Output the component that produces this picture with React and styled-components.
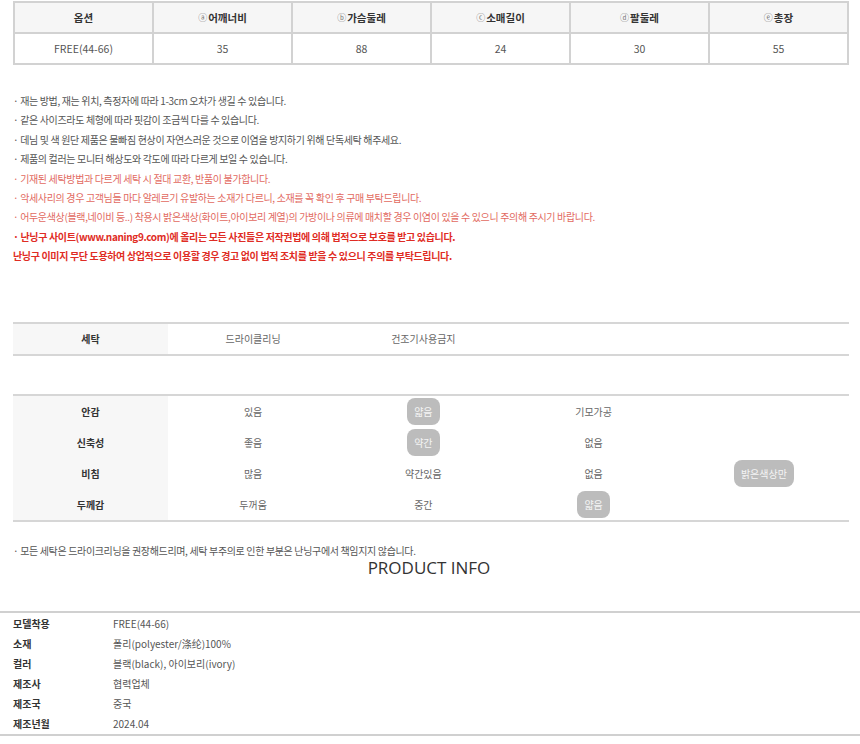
import React from 'react';
import styled, { createGlobalStyle } from 'styled-components';

const GlobalStyle = createGlobalStyle`
  body {
    margin: 0;
    background: #fff;
    font-family: "Noto Sans CJK KR", "Noto Sans", sans-serif;
    color: #333;
  }
`;

const Page = styled.div`
  width: 860px;
  padding-top: 1px;
`;

const Inner = styled.div`
  padding: 0 11px 0 13px;
`;

const SizeTable = styled.div`
  display: grid;
  grid-template-columns: repeat(6, 1fr);
  border-top: 2px solid #d2d2d2;
  border-left: 2px solid #d2d2d2;
`;

const SizeCell = styled.div`
  height: 29px;
  display: flex;
  align-items: center;
  justify-content: center;
  border-right: 2px solid #d2d2d2;
  border-bottom: 2px solid #d2d2d2;
  font-size: 10.5px;
  background: ${p => (p.$head ? '#f6f6f6' : '#fff')};
  font-weight: ${p => (p.$head ? 700 : 400)};
  color: ${p => (p.$head ? '#333' : '#555')};
`;

const Mark = styled.span`
  font-weight: 400;
  font-size: 9px;
  color: #777;
  margin-right: 1px;
`;

const Notes = styled.ul`
  list-style: none;
  margin: 26px 0 0;
  padding: 0;
`;

const Note = styled.li`
  font-size: 10px;
  line-height: 19.4px;
  letter-spacing: -0.35px;
  color: ${p => (p.$tone === 'soft' ? '#e26a5f' : p.$tone === 'strong' ? '#df2c24' : '#555')};
  font-weight: ${p => (p.$tone === 'strong' ? 700 : 400)};
  white-space: nowrap;
`;

const CareTable = styled.div`
  display: grid;
  grid-template-columns: 155px repeat(4, 1fr);
  border-top: 2px solid #d6d6d6;
  border-bottom: 2px solid #d6d6d6;
  margin-top: ${p => p.$gap}px;
`;

const Label = styled.div`
  height: ${p => p.$h}px;
  display: flex;
  align-items: center;
  justify-content: center;
  background: #f7f7f7;
  font-size: 10px;
  font-weight: 700;
  color: #333;
`;

const Value = styled.div`
  height: ${p => p.$h}px;
  display: flex;
  align-items: center;
  justify-content: center;
  font-size: 10px;
  color: #666;
`;

const Pill = styled.span`
  display: inline-flex;
  align-items: center;
  justify-content: center;
  height: 27px;
  padding: 0 7px;
  border-radius: 8px;
  background: #bcbcbc;
  color: #f4f4f4;
  font-size: 10px;
`;

const Footnote = styled.p`
  margin: 21px 0 0;
  font-size: 10px;
  line-height: 15px;
  letter-spacing: -0.35px;
  color: #555;
`;

const Title = styled.h2`
  margin: -1px 0 0;
  text-align: center;
  font-family: "Open Sans", "Noto Sans", sans-serif;
  font-weight: 400;
  font-size: 17px;
  line-height: 22px;
  color: #333;
  padding-right: 4px;
`;

const InfoTable = styled.div`
  margin-top: 32px;
  border-top: 2px solid #d0d0d0;
  border-bottom: 2px solid #d0d0d0;
  padding: 1px 0 0;
`;

const InfoRow = styled.div`
  display: grid;
  grid-template-columns: 100px 1fr;
  padding-left: 13px;
  height: 20px;
  align-items: center;
  font-size: 10px;
`;

const InfoKey = styled.span`
  font-weight: 700;
  color: #333;
`;

const InfoVal = styled.span`
  color: #555;
`;

const sizeHead = [
  ['', '옵션'],
  ['ⓐ', '어깨너비'],
  ['ⓑ', '가슴둘레'],
  ['ⓒ', '소매길이'],
  ['ⓓ', '팔둘레'],
  ['ⓔ', '총장'],
];
const sizeRow = ['FREE(44-66)', '35', '88', '24', '30', '55'];

const notes = [
  ['', '· 재는 방법, 재는 위치, 측정자에 따라 1-3cm 오차가 생길 수 있습니다.'],
  ['', '· 같은 사이즈라도 체형에 따라 핏감이 조금씩 다를 수 있습니다.'],
  ['', '· 데님 및 색 원단 제품은 물빠짐 현상이 자연스러운 것으로 이염을 방지하기 위해 단독세탁 해주세요.'],
  ['', '· 제품의 컬러는 모니터 해상도와 각도에 따라 다르게 보일 수 있습니다.'],
  ['soft', '· 기재된 세탁방법과 다르게 세탁 시 절대 교환, 반품이 불가합니다.'],
  ['soft', '· 악세사리의 경우 고객님들 마다 알레르기 유발하는 소재가 다르니, 소재를 꼭 확인 후 구매 부탁드립니다.'],
  ['soft', '· 어두운색상(블랙,네이비 등..) 착용시 밝은색상(화이트,아이보리 계열)의 가방이나 의류에 매치할 경우 이염이 있을 수 있으니 주의해 주시기 바랍니다.'],
  ['strong', '· 난닝구 사이트(www.naning9.com)에 올리는 모든 사진들은 저작권법에 의해 법적으로 보호를 받고 있습니다.'],
  ['strong', '난닝구 이미지 무단 도용하여 상업적으로 이용할 경우 경고 없이 법적 조치를 받을 수 있으니 주의를 부탁드립니다.'],
];

const props = [
  ['안감', ['있음', '*얇음', '기모가공', '']],
  ['신축성', ['좋음', '*약간', '없음', '']],
  ['비침', ['많음', '약간있음', '없음', '*밝은색상만']],
  ['두께감', ['두꺼움', '중간', '*얇음', '']],
];

const info = [
  ['모델착용', 'FREE(44-66)'],
  ['소재', '폴리(polyester/涤纶)100%'],
  ['컬러', '블랙(black), 아이보리(ivory)'],
  ['제조사', '협력업체'],
  ['제조국', '중국'],
  ['제조년월', '2024.04'],
];

export default function App() {
  return (
    <Page>
      <GlobalStyle />
      <Inner>
        <SizeTable>
          {sizeHead.map(([m, t]) => (
            <SizeCell key={t} $head>
              {m && <Mark>{m}</Mark>}
              {t}
            </SizeCell>
          ))}
          {sizeRow.map((v, i) => (
            <SizeCell key={i}>{v}</SizeCell>
          ))}
        </SizeTable>

        <Notes>
          {notes.map(([tone, text], i) => (
            <Note key={i} $tone={tone}>{text}</Note>
          ))}
        </Notes>

        <CareTable $gap={56}>
          <Label $h={30}>세탁</Label>
          <Value $h={30}>드라이클리닝</Value>
          <Value $h={30}>건조기사용금지</Value>
          <Value $h={30} />
          <Value $h={30} />
        </CareTable>

        <CareTable $gap={38}>
          {props.map(([label, vals]) => (
            <React.Fragment key={label}>
              <Label $h={31}>{label}</Label>
              {vals.map((v, i) => (
                <Value key={i} $h={31}>
                  {v.startsWith('*') ? <Pill>{v.slice(1)}</Pill> : v}
                </Value>
              ))}
            </React.Fragment>
          ))}
        </CareTable>

        <Footnote>· 모든 세탁은 드라이크리닝을 권장해드리며, 세탁 부주의로 인한 부분은 난닝구에서 책임지지 않습니다.</Footnote>
        <Title>PRODUCT INFO</Title>
      </Inner>

      <InfoTable>
        {info.map(([k, v]) => (
          <InfoRow key={k}>
            <InfoKey>{k}</InfoKey>
            <InfoVal>{v}</InfoVal>
          </InfoRow>
        ))}
      </InfoTable>
    </Page>
  );
}
